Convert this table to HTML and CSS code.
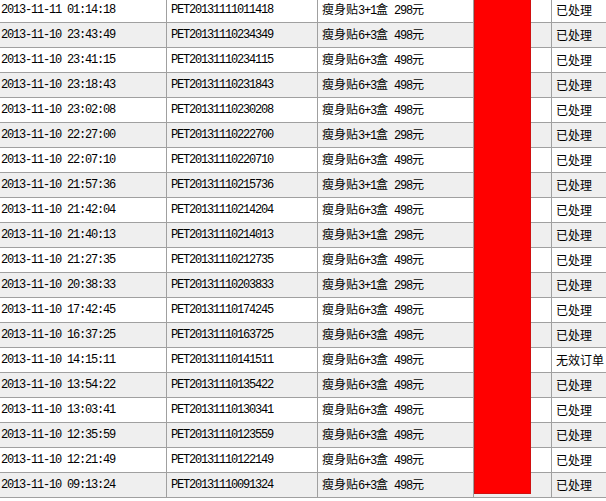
FILE: index.html
```html
<!DOCTYPE html>
<html lang="zh-CN">
<head>
<meta charset="utf-8">
<title>订单列表</title>
<link rel="stylesheet" href="styles.css">
</head>
<body>
<div class="wrap">
<table class="orders">
<colgroup><col class="c1"><col class="c2"><col class="c3"><col class="c4"><col class="c5"></colgroup>
<tbody>
<tr><td class="n">2013-11-11 01:14:18</td><td class="n">PET20131111011418</td><td>瘦身贴<span class="n">3+1</span>盒<span class="n"> 298</span>元</td><td></td><td>已处理</td></tr>
<tr><td class="n">2013-11-10 23:43:49</td><td class="n">PET20131110234349</td><td>瘦身贴<span class="n">6+3</span>盒<span class="n"> 498</span>元</td><td></td><td>已处理</td></tr>
<tr><td class="n">2013-11-10 23:41:15</td><td class="n">PET20131110234115</td><td>瘦身贴<span class="n">6+3</span>盒<span class="n"> 498</span>元</td><td></td><td>已处理</td></tr>
<tr><td class="n">2013-11-10 23:18:43</td><td class="n">PET20131110231843</td><td>瘦身贴<span class="n">6+3</span>盒<span class="n"> 498</span>元</td><td></td><td>已处理</td></tr>
<tr><td class="n">2013-11-10 23:02:08</td><td class="n">PET20131110230208</td><td>瘦身贴<span class="n">6+3</span>盒<span class="n"> 498</span>元</td><td></td><td>已处理</td></tr>
<tr><td class="n">2013-11-10 22:27:00</td><td class="n">PET20131110222700</td><td>瘦身贴<span class="n">3+1</span>盒<span class="n"> 298</span>元</td><td></td><td>已处理</td></tr>
<tr><td class="n">2013-11-10 22:07:10</td><td class="n">PET20131110220710</td><td>瘦身贴<span class="n">6+3</span>盒<span class="n"> 498</span>元</td><td></td><td>已处理</td></tr>
<tr><td class="n">2013-11-10 21:57:36</td><td class="n">PET20131110215736</td><td>瘦身贴<span class="n">3+1</span>盒<span class="n"> 298</span>元</td><td></td><td>已处理</td></tr>
<tr><td class="n">2013-11-10 21:42:04</td><td class="n">PET20131110214204</td><td>瘦身贴<span class="n">6+3</span>盒<span class="n"> 498</span>元</td><td></td><td>已处理</td></tr>
<tr><td class="n">2013-11-10 21:40:13</td><td class="n">PET20131110214013</td><td>瘦身贴<span class="n">3+1</span>盒<span class="n"> 298</span>元</td><td></td><td>已处理</td></tr>
<tr><td class="n">2013-11-10 21:27:35</td><td class="n">PET20131110212735</td><td>瘦身贴<span class="n">6+3</span>盒<span class="n"> 498</span>元</td><td></td><td>已处理</td></tr>
<tr><td class="n">2013-11-10 20:38:33</td><td class="n">PET20131110203833</td><td>瘦身贴<span class="n">3+1</span>盒<span class="n"> 298</span>元</td><td></td><td>已处理</td></tr>
<tr><td class="n">2013-11-10 17:42:45</td><td class="n">PET20131110174245</td><td>瘦身贴<span class="n">6+3</span>盒<span class="n"> 498</span>元</td><td></td><td>已处理</td></tr>
<tr><td class="n">2013-11-10 16:37:25</td><td class="n">PET20131110163725</td><td>瘦身贴<span class="n">6+3</span>盒<span class="n"> 498</span>元</td><td></td><td>已处理</td></tr>
<tr><td class="n">2013-11-10 14:15:11</td><td class="n">PET20131110141511</td><td>瘦身贴<span class="n">6+3</span>盒<span class="n"> 498</span>元</td><td></td><td>无效订单</td></tr>
<tr><td class="n">2013-11-10 13:54:22</td><td class="n">PET20131110135422</td><td>瘦身贴<span class="n">6+3</span>盒<span class="n"> 498</span>元</td><td></td><td>已处理</td></tr>
<tr><td class="n">2013-11-10 13:03:41</td><td class="n">PET20131110130341</td><td>瘦身贴<span class="n">6+3</span>盒<span class="n"> 498</span>元</td><td></td><td>已处理</td></tr>
<tr><td class="n">2013-11-10 12:35:59</td><td class="n">PET20131110123559</td><td>瘦身贴<span class="n">6+3</span>盒<span class="n"> 498</span>元</td><td></td><td>已处理</td></tr>
<tr><td class="n">2013-11-10 12:21:49</td><td class="n">PET20131110122149</td><td>瘦身贴<span class="n">6+3</span>盒<span class="n"> 498</span>元</td><td></td><td>已处理</td></tr>
<tr><td class="n">2013-11-10 09:13:24</td><td class="n">PET20131110091324</td><td>瘦身贴<span class="n">6+3</span>盒<span class="n"> 498</span>元</td><td></td><td>已处理</td></tr>
</tbody>
</table>
<div class="redact"></div>
</div>
</body>
</html>
```
FILE: styles.css
```css
html, body {
  margin: 0;
  padding: 0;
  background: #fff;
  overflow: hidden;
}
body {
  font-family: "Noto Sans CJK SC", "Liberation Mono", sans-serif;
  font-size: 12px;
  color: #000;
}
.wrap {
  position: relative;
  width: 606px;
  height: 501px;
  overflow: hidden;
}
.orders {
  border-collapse: collapse;
  table-layout: fixed;
  width: 645px;
  margin: -3px 0 0 -4px;
}
.c1 { width: 170px; }
.c2 { width: 151px; }
.c3 { width: 156px; }
.c4 { width: 78px; }
.c5 { width: 90px; }
.orders tr {
  height: 25px;
}
.orders td {
  border: 1px solid #a0a0a0;
  height: 23px;
  padding: 0 0 1px 4px;
  line-height: 14px;
  white-space: nowrap;
  overflow: hidden;
  vertical-align: middle;
}
.orders tr:nth-child(even) td {
  background: #efefef;
}
.n {
  font-family: "Liberation Mono", monospace;
  letter-spacing: -1.2px;
}
.redact {
  position: absolute;
  left: 474px;
  top: -4px;
  width: 55px;
  height: 496px;
  background: #ff0000;
  border: 1px solid #d01010;
}
```
